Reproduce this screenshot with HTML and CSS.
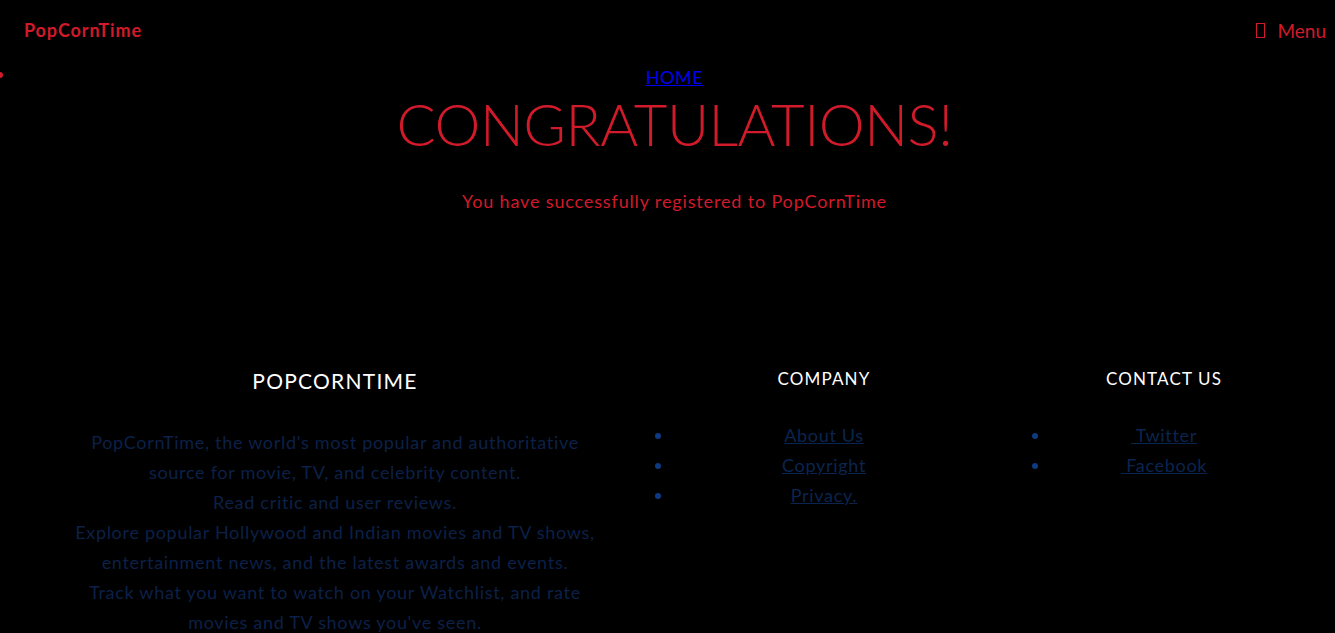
FILE: index.html
```html
<!DOCTYPE html>
<html>
<head>
<meta charset="utf-8">
<link rel="stylesheet" href="styles.css">
</head>
<body>
<header class="topbar">
  <a class="brand">PopCornTime</a>
  <a class="menu"><span class="tofu"></span>Menu</a>
</header>
<span class="dot"></span>
<main class="hero">
  <a class="home" href="#">HOME</a>
  <h1 class="title">CONGRATULATIONS!</h1>
  <p class="msg">You have successfully registered to PopCornTime</p>
</main>
<footer class="footer">
  <div class="col col-about">
    <h3 class="col-title big">POPCORNTIME</h3>
    <p class="about">PopCornTime, the world's most popular and authoritative<br>source for movie, TV, and celebrity content.<br>Read critic and user reviews.<br>Explore popular Hollywood and Indian movies and TV shows,<br>entertainment news, and the latest awards and events.<br>Track what you want to watch on your Watchlist, and rate<br>movies and TV shows you've seen.</p>
  </div>
  <div class="col col-company">
    <h3 class="col-title">COMPANY</h3>
    <ul class="links">
      <li><a href="#">About Us</a></li>
      <li><a href="#">Copyright</a></li>
      <li><a href="#">Privacy.</a></li>
    </ul>
  </div>
  <div class="col col-contact">
    <h3 class="col-title">CONTACT US</h3>
    <ul class="links">
      <li><a href="#">&nbsp;Twitter</a></li>
      <li><a href="#">&nbsp;Facebook</a></li>
    </ul>
  </div>
</footer>
</body>
</html>
```
FILE: styles.css
```css
html, body {
  margin: 0;
  padding: 0;
  background: #000;
  font-family: "Lato", "Open Sans", sans-serif;
  font-weight: 300;
  overflow: hidden;
}
.topbar {
  height: 60px;
  display: flex;
  align-items: center;
  justify-content: space-between;
  padding: 0 9px 0 24px;
}
.brand {
  color: #d11a2a;
  font-size: 18px;
  font-weight: 700;
  letter-spacing: 0.9px;
}
.menu {
  color: #d11a2a;
  font-size: 19px;
  font-weight: 400;
  display: flex;
  align-items: center;
}
.tofu {
  display: inline-block;
  width: 7px;
  height: 13px;
  border: 1px solid #d11a2a;
  margin-right: 12px;
}
.dot {
  position: absolute;
  left: -3px;
  top: 72px;
  width: 6px;
  height: 6px;
  border-radius: 50%;
  background: #d11a2a;
}
.hero {
  display: flex;
  flex-direction: column;
  align-items: center;
  padding-left: 14px;
}
.home {
  color: #0000ee;
  font-size: 18px;
  font-weight: 400;
  line-height: 24px;
  margin-top: 5px;
  letter-spacing: 0.6px;
}
.title {
  margin: 0;
  color: #d11a2a;
  font-size: 58px;
  font-weight: 300;
  line-height: 70px;
  letter-spacing: -0.45px;
}
.msg {
  margin: 30px 0 0;
  color: #d11a2a;
  font-size: 18px;
  font-weight: 400;
  line-height: 24px;
  letter-spacing: 0.85px;
}
.footer {
  display: grid;
  grid-template-columns: 590px 344px 303px;
  padding: 154px 0 0 40px;
}
.col {
  text-align: center;
}
.col-company { padding-left: 44px; }
.col-contact { padding-left: 77px; }
.col-title {
  margin: 0;
  color: #fff;
  font-weight: 400;
  font-size: 17px;
  line-height: 24px;
  letter-spacing: 1.15px;
}
.col-title.big {
  font-size: 21px;
  line-height: 28px;
  letter-spacing: 1.25px;
}
.about {
  margin: 32px 0 0;
  color: #0c2048;
  font-size: 18px;
  font-weight: 400;
  line-height: 30px;
  letter-spacing: 0.7px;
}
.links {
  list-style: disc;
  margin: 29px 0 0;
  padding: 0;
  color: #0d3a80;
}
.links li {
  font-size: 18px;
  font-weight: 400;
  line-height: 30px;
  letter-spacing: 0.7px;
}
.links a {
  color: #0a2550;
  text-decoration: underline;
}
```
